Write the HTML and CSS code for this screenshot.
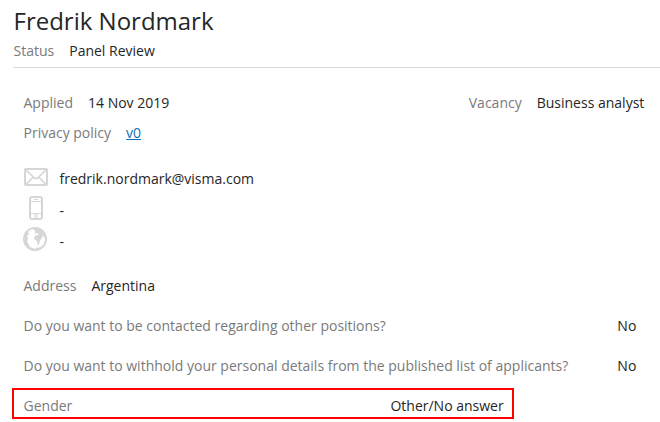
FILE: index.html
```html
<!DOCTYPE html>
<html lang="en">
<head>
<meta charset="utf-8">
<title>Fredrik Nordmark</title>
<link rel="stylesheet" href="styles.css">
</head>
<body>
<main class="profile">
  <header class="head">
    <h1>Fredrik Nordmark</h1>
    <div class="field"><span class="label">Status</span><span>Panel Review</span></div>
  </header>
  <section class="details">
    <div class="row">
      <div class="field"><span class="label">Applied</span><span>14 Nov 2019</span></div>
      <div class="field"><span class="label">Vacancy</span><span>Business analyst</span></div>
    </div>
    <div class="field privacy"><span class="label">Privacy policy</span><a href="#">v0</a></div>
    <ul class="contacts">
      <li class="email"><svg width="26" height="26" viewBox="0 0 26 26" fill="none" stroke="#d6d6d6" stroke-width="2"><rect x="2" y="5" width="22" height="16" rx="1"/><path d="M3 6l8.500 8q1.500 1.200 3 0L23 6M3 20.500l7-7M23 20.500l-7-7" stroke-width="1.700"/></svg><span>fredrik.nordmark@visma.com</span></li>
      <li><svg width="26" height="26" viewBox="0 0 26 26" fill="none" stroke="#d6d6d6"><rect x="7" y="2" width="12" height="22" rx="2" stroke-width="2"/><path d="M7 6.500h12M7 18.500h12M11 4.500h4"/><circle cx="13" cy="21" r="1.500"/></svg><span>-</span></li>
      <li><svg width="26" height="26" viewBox="0 0 26 26"><circle cx="12" cy="13" r="12" fill="#d6d6d6"/><path fill="#fff" d="M7 4l3-1 2 2v3l2-1 2 1-3 2-1 3 2 2 1 5-3 3-5-2-2-4-1-1 1-4-1-2 2-2-1-2zM20 9l2 4-1 5-3 3-4 1 2-5 1-3 2-2z"/><path fill="#d6d6d6" d="M12 10l3-1 3 1 1 2-2 2-1 4-1 1-1-4-3-2z"/></svg><span>-</span></li>
    </ul>
    <div class="field address"><span class="label">Address</span><span>Argentina</span></div>
    <div class="question"><span class="label">Do you want to be contacted regarding other positions?</span><span>No</span></div>
    <div class="question"><span class="label">Do you want to withhold your personal details from the published list of applicants?</span><span>No</span></div>
  </section>
  <div class="gender"><span class="label">Gender</span><span>Other/No answer</span></div>
</main>
</body>
</html>
```
FILE: styles.css
```css
* { box-sizing: border-box; }
body { margin: 0; background: #fff; color: #262626; font: 14px/20px "Open Sans", sans-serif; overflow: hidden; }
.profile { padding-left: 13px; }
.head { height: 68px; border-bottom: 1px solid #d9d9d9; padding-left: .5px; }
h1 { margin: 0; padding-top: 4px; font-size: 24px; line-height: 33px; font-weight: 400; height: 41px; }
.label { color: #7a7a7a; }
.field { display: flex; gap: 15px; }
.details { padding: 25px 15.7px 0 10.5px; }
.row { display: flex; justify-content: space-between; }
.privacy { margin-top: 10px; }
a { color: #1270b0; }
.contacts { list-style: none; margin: 21px 0 0; padding: 0; }
.contacts li { display: flex; gap: 10.5px; height: 31px; line-height: 31px; }
.contacts .email { line-height: 29px; }
.contacts svg { flex: none; margin-left: -.5px; }
.address { margin-top: 19px; }
.question { display: flex; justify-content: space-between; margin-top: 20px; padding-right: 8px; }
.gender { display: flex; justify-content: space-between; width: 502px; height: 31px; margin: 12px 0 0 -1px; padding: 6px 8.3px 0 9.5px; border: 2px solid #f00; }
```
